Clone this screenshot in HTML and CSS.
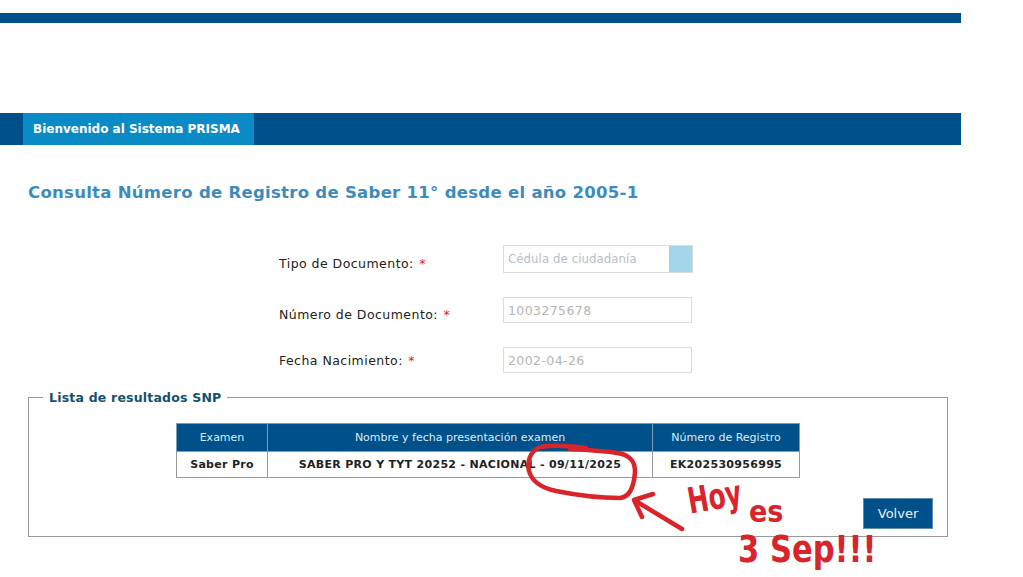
FILE: index.html
```html
<!DOCTYPE html>
<html lang="es">
<head>
<meta charset="utf-8">
<title>PRISMA</title>
<link rel="stylesheet" href="styles.css">
</head>
<body>
<div class="page">
  <div class="top-bar"></div>
  <nav class="nav-bar"><span class="nav-tab">Bienvenido al Sistema PRISMA</span></nav>
  <h1 class="title">Consulta Número de Registro de Saber 11° desde el año 2005-1</h1>
  <form class="form">
    <div class="row row-select">
      <label class="label">Tipo de Documento: <span class="req">*</span></label>
      <div class="select"><span class="select-text">Cédula de ciudadanía</span><span class="select-btn"></span></div>
    </div>
    <div class="row row-num">
      <label class="label">Número de Documento: <span class="req">*</span></label>
      <div class="input">1003275678</div>
    </div>
    <div class="row row-date">
      <label class="label">Fecha Nacimiento: <span class="req">*</span></label>
      <div class="input">2002-04-26</div>
    </div>
  </form>
  <fieldset class="results">
    <legend class="legend">Lista de resultados SNP</legend>
    <table class="table">
      <thead>
        <tr><th class="col-a">Examen</th><th class="col-b">Nombre y fecha presentación examen</th><th class="col-c">Número de Registro</th></tr>
      </thead>
      <tbody>
        <tr><td>Saber Pro</td><td>SABER PRO Y TYT 20252 - NACIONAL - 09/11/2025</td><td>EK202530956995</td></tr>
      </tbody>
    </table>
    <div class="actions"><button type="button" class="btn">Volver</button></div>
  </fieldset>
</div>
<svg class="ink" width="1023" height="577" viewBox="0 0 1023 577" aria-hidden="true">
  <path d="M586 448C570 446 548 444 538 448C530 452 527 462 529 471C532 482 542 488 556 491C576 495 602 498 620 498C630 497 634 486 635 472C635 463 632 457 622 454C610 451 590 450 570 449" />
  <path d="M682 529L634 500M653 494L634 500L642 517" />
</svg>
<span class="hand hand-hoy">Hoy</span>
<span class="hand hand-es">es</span>
<span class="hand hand-sep">3 Sep!!!</span>
</body>
</html>
```
FILE: styles.css
```css
html, body { margin: 0; padding: 0; background: #fff; }
body { position: relative; width: 1023px; height: 577px; overflow: hidden; font-family: "DejaVu Sans", Verdana, sans-serif; color: #222; }
.page { width: 961px; padding-top: 13px; }
.top-bar { height: 10px; background: #00508a; }
.nav-bar { margin-top: 90px; height: 32px; background: #00508a; padding-left: 23px; display: flex; }
.nav-tab { width: 231px; background: #0b8bc6; color: #fff; font-size: 12px; font-weight: bold; line-height: 32px; padding-left: 10px; box-sizing: border-box; white-space: nowrap; }
.title { margin: 38px 0 0 28px; font-size: 16.5px; line-height: 20px; font-weight: bold; color: #3d8bbd; letter-spacing: 0.285px; white-space: nowrap; }
.form { padding-left: 279px; margin-top: 42px; display: flex; flex-direction: column; }
.row { display: grid; grid-template-columns: 224px 190px; align-items: center; }
.row-num { margin-top: 24px; }
.row-date { margin-top: 24px; }
.label { font-size: 12.5px; letter-spacing: 0.46px; color: #222; white-space: nowrap; position: relative; top: 4px; }
.row-date .label { top: 0; }
.req { color: #d22; margin-left: 1px; }
.select { height: 28px; border: 1px solid #dcdcdc; box-sizing: border-box; display: flex; justify-content: space-between; align-items: center; }
.select-text { font-size: 11.7px; color: #b4c0c8; padding-left: 4px; letter-spacing: 0.1px; white-space: nowrap; }
.select-btn { width: 23px; height: 26px; background: #a3d6ea; }
.input { width: 189px; height: 26px; border: 1px solid #dcdcdc; box-sizing: border-box; font-size: 12.5px; line-height: 25px; padding-left: 4px; color: #b5b5b5; letter-spacing: 0.4px; }
.results { margin: 15px 0 0 28px; width: 920px; height: 149px; padding: 0; border: 1px solid #999; border-radius: 0; box-sizing: border-box; position: relative; }
.legend { margin-left: 14px; padding: 2px 6px 0; font-size: 12.5px; font-weight: bold; color: #14506f; letter-spacing: 0.2px; line-height: 16px; }
.table { margin: 17px 0 0 147px; width: 623px; border-collapse: collapse; table-layout: fixed; font-size: 11px; }
.table th { height: 28px; padding: 0; background: #00508a; color: #dcecf5; font-weight: normal; border: 1px solid #7a9cb5; text-align: center; box-sizing: border-box; }
.table td { height: 26px; padding: 0; background: #fff; border: 1px solid #999; font-weight: bold; color: #222; text-align: center; letter-spacing: 0.3px; box-sizing: border-box; }
.col-a { width: 91px; }
.col-b { width: 385px; }
.col-c { width: 147px; }
.actions { display: flex; justify-content: flex-end; padding-right: 14px; margin-top: 20px; }
.btn { width: 70px; height: 31px; padding: 0; background: #00508a; border: 1px solid #5f8fb0; color: #e8f2f8; font-family: inherit; font-size: 13px; }
.ink { position: absolute; left: 0; top: 0; fill: none; stroke: #d9242b; stroke-width: 4.5; stroke-linecap: round; stroke-linejoin: round; pointer-events: none; }
.hand { position: absolute; color: #d9242b; font-family: "DejaVu Sans Condensed", "DejaVu Sans", sans-serif; font-weight: bold; white-space: nowrap; line-height: 1; }
.hand-hoy { left: 688px; top: 487px; font-size: 30px; transform: rotate(-10deg) scale(0.92, 1.2); transform-origin: left center; }
.hand-es { left: 749px; top: 497px; font-size: 30px; transform-origin: left center; }
.hand-sep { left: 738px; top: 533px; font-size: 33px; transform: scale(1.03, 1.12); transform-origin: left center; }
```
